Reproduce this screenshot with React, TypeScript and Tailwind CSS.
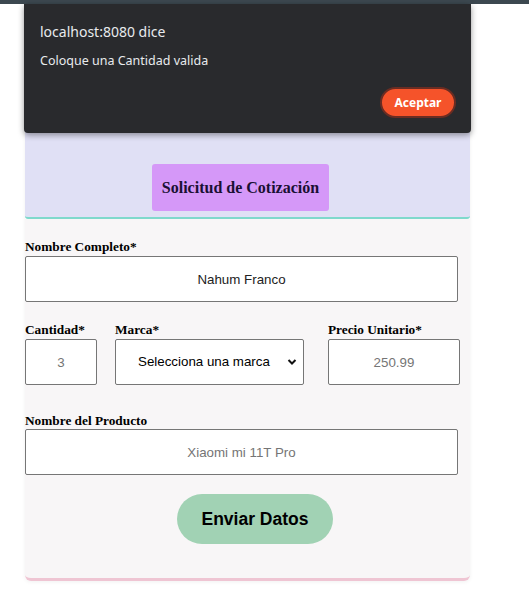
import React from 'react';

const serif = { fontFamily: '"Liberation Serif", "Times New Roman", serif' };

const Label: React.FC<{ text: string; className?: string }> = ({ text, className = '' }) => (
    <label className={`block text-[13.3px] font-bold leading-[15px] text-black ${className}`} style={serif}>
        {text}
    </label>
);

const inputCls =
    'h-[46px] border border-[#767676] rounded-[2px] bg-white text-center text-[13.33px] text-[#222] placeholder:text-[#757575] outline-none font-["Liberation_Sans",Arial,sans-serif]';

const App: React.FC = () => {
    return (
        <div className="relative w-[529px] h-[609px] bg-white overflow-hidden">
            <div className="h-[4px] bg-[#3c4850]" />

            {/* form card */}
            <div className="ml-[25px] w-[445px] shadow-[0_1px_4px_rgba(0,0,0,0.06)] rounded-md">
                <div className="bg-[#e0e0f5] pt-[160px] pb-[6px] border-b-2 border-[#7fd9cc] rounded-t-md rounded-b-[3px]">
                    <div
                        className="ml-[127px] w-[177px] h-[47px] bg-[#d598f8] rounded-[3px] flex items-center justify-center text-[16px] font-bold text-[#1a1033]"
                        style={serif}
                    >
                        Solicitud de Cotización
                    </div>
                </div>

                <div className="bg-[#f8f6f7] pt-[20px] pb-[34px] border-b-[3px] border-[#efc5d3] rounded-b-md">
                    <Label text="Nombre Completo*" />
                    <input className={`${inputCls} mt-[2px] w-[433px]`} defaultValue="Nahum Franco" />

                    <div className="flex mt-[20px]">
                        <div className="w-[90px]">
                            <Label text="Cantidad*" />
                            <input className={`${inputCls} mt-[2px] w-[72px]`} placeholder="3" />
                        </div>
                        <div className="w-[213px]">
                            <Label text="Marca*" />
                            <div className="relative mt-[2px] w-[189px] h-[46px] border border-[#767676] rounded-[2px] bg-white flex items-center pl-[22px] text-[13.33px] text-black font-['Liberation_Sans',Arial,sans-serif]">
                                Selecciona una marca
                                <svg className="absolute right-[6px] top-[17px]" width="10" height="10" viewBox="0 0 10 10">
                                    <path d="M1.5 3 L5 6.5 L8.5 3" fill="none" stroke="#111" strokeWidth="2" />
                                </svg>
                            </div>
                        </div>
                        <div>
                            <Label text="Precio Unitario*" />
                            <input className={`${inputCls} mt-[2px] w-[132px]`} placeholder="250.99" />
                        </div>
                    </div>

                    <Label text="Nombre del Producto" className="mt-[28px]" />
                    <input className={`${inputCls} mt-[1px] w-[433px]`} placeholder="Xiaomi mi 11T Pro" />

                    <div className="flex justify-center mt-[19px] pl-[15px]">
                        <button className="w-[156px] h-[50px] rounded-full bg-[#a1d2b4] text-[17.5px] font-bold text-black font-['Liberation_Sans',Arial,sans-serif]">
                            Enviar Datos
                        </button>
                    </div>
                </div>
            </div>

            {/* browser alert */}
            <div className="absolute left-[24px] top-[4px] w-[447px] h-[129px] bg-[#292a2d] rounded-b-[4px] shadow-[0_2px_6px_rgba(0,0,0,0.4)] font-['Noto_Sans',sans-serif]">
                <div className="pl-[16px] pt-[18px] text-[14px] leading-[20px] text-[#e8eaed]">localhost:8080 dice</div>
                <div className="pl-[16px] pt-[10px] text-[12.5px] leading-[18px] text-[#e8eaed]">Coloque una Cantidad valida</div>
                <button className="absolute right-[15px] top-[83px] w-[76px] h-[31px] rounded-full bg-[#f5532a] border-2 border-[#6a2c22] text-[12px] font-bold text-white">
                    Aceptar
                </button>
            </div>
        </div>
    );
};

export default App;
